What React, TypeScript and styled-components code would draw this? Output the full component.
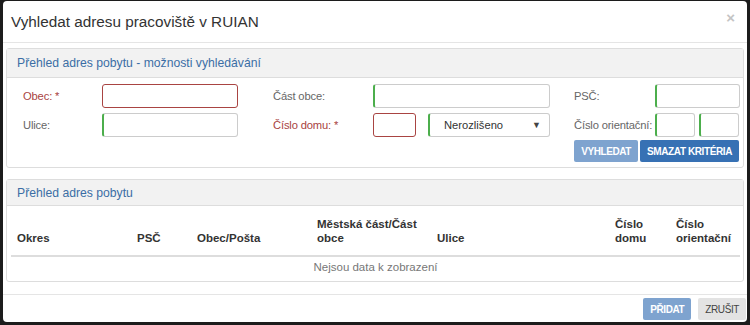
import styled, { createGlobalStyle } from "styled-components";

const GlobalStyle = createGlobalStyle`
  html, body {
    margin: 0;
    padding: 0;
    background: #1c1c1c;
  }
  body {
    font-family: "Liberation Sans", Arial, sans-serif;
    color: #333;
  }
  * {
    box-sizing: border-box;
  }
`;

const Backdrop = styled.div`
  width: 750px;
  height: 325px;
  padding: 1px 3px 3px 3px;
`;

const Modal = styled.div`
  display: flex;
  flex-direction: column;
  height: 100%;
  background: #fff;
  border-radius: 4px;
  overflow: hidden;
`;

const Header = styled.div`
  display: flex;
  align-items: center;
  justify-content: space-between;
  height: 42px;
  padding: 0 12px 0 8px;
  border-bottom: 1px solid #e5e5e5;
`;

const Title = styled.h4`
  margin: 0;
  font-size: 15.3px;
  font-weight: normal;
  color: #333;
`;

const Close = styled.span`
  font-size: 15px;
  font-weight: bold;
  color: #c4c4c4;
  margin-top: -8px;
`;

const Body = styled.div`
  display: flex;
  flex-direction: column;
  gap: 11px;
  padding: 5px 3px 0 3px;
`;

const Panel = styled.div`
  border: 1px solid #ddd;
  border-radius: 3px;
`;

const PanelHeading = styled.div<{ h: number }>`
  display: flex;
  align-items: center;
  height: ${p => p.h}px;
  padding: 0 10px;
  background: #f2f2f2;
  border-bottom: 1px solid #ddd;
  color: #3b6ea5;
  font-size: 12.2px;
`;

const SearchBody = styled.div`
  padding: 6px 4px 5px 16px;
`;

const FieldGrid = styled.div`
  display: grid;
  grid-template-columns: 79px 136px 135px 177px 105px 85px;
  grid-auto-rows: 24px;
  row-gap: 5px;
  align-items: center;
`;

const Label = styled.label<{ required?: boolean; indent?: number }>`
  padding-left: ${p => p.indent ?? 0}px;
  font-size: 11.2px;
  letter-spacing: -0.15px;
  white-space: nowrap;
  color: ${p => (p.required ? "#a94442" : "#666")};
`;

const Input = styled.div<{ state: "error" | "ok"; w?: number }>`
  height: 24px;
  width: ${p => (p.w ? `${p.w}px` : "100%")};
  border: 1px solid ${p => (p.state === "error" ? "#a94442" : "#ccc")};
  border-left: ${p => (p.state === "ok" ? "2px solid #4cae4c" : undefined)};
  border-radius: 3px;
  background: #fff;
`;

const Pair = styled.div<{ gap: number }>`
  display: flex;
  gap: ${p => p.gap}px;
`;

const Select = styled.div`
  display: flex;
  align-items: center;
  justify-content: space-between;
  flex: 1;
  height: 24px;
  padding: 0 8px 0 14px;
  border: 1px solid #ccc;
  border-left: 2px solid #4cae4c;
  border-radius: 3px;
  font-size: 11.2px;
  color: #333;
`;

const Caret = styled.span`
  font-size: 9px;
  color: #444;
`;

const Actions = styled.div<{ pad?: string; gap: number }>`
  display: flex;
  justify-content: flex-end;
  gap: ${p => p.gap}px;
  padding: ${p => p.pad ?? "0"};
`;

const Button = styled.button<{ variant: "primary" | "disabled" | "default" }>`
  height: 22px;
  padding: 0 6px;
  border: 1px solid transparent;
  border-radius: 2px;
  font-family: inherit;
  font-size: 10px;
  letter-spacing: -0.4px;
  text-transform: uppercase;
  background: ${p =>
    p.variant === "primary" ? "#3771b4" : p.variant === "disabled" ? "#7ea3cf" : "#e3e3e3"};
  color: ${p => (p.variant === "default" ? "#444" : "#fff")};
  font-weight: ${p => (p.variant === "default" ? "normal" : "bold")};
`;

const TableBody = styled.div`
  padding: 4px 4px 5px 4px;
`;

const Table = styled.table`
  width: 100%;
  border-collapse: collapse;
  font-size: 11.5px;
  table-layout: fixed;
`;

const Th = styled.th<{ w: number }>`
  width: ${p => p.w}px;
  padding: 7px 6px 10px 6px;
  text-align: left;
  vertical-align: bottom;
  font-weight: bold;
  line-height: 14px;
  color: #333;
  border-bottom: 2px solid #ddd;
`;

const Empty = styled.td`
  height: 20px;
  text-align: center;
  color: #777;
  line-height: 14px;
`;

const Footer = styled.div`
  margin-top: auto;
  border-top: 1px solid #e5e5e5;
  padding: 3px 1px 2px 0;
`;

const columns = [
  { label: "Okres", w: 120 },
  { label: "PSČ", w: 60 },
  { label: "Obec/Pošta", w: 120 },
  { label: "Městská část/Část obce", w: 120 },
  { label: "Ulice", w: 178 },
  { label: "Číslo domu", w: 61 },
  { label: "Číslo orientační", w: 70 },
];

export default function App() {
  return (
    <>
      <GlobalStyle />
      <Backdrop>
        <Modal>
          <Header>
            <Title>Vyhledat adresu pracoviště v RUIAN</Title>
            <Close>×</Close>
          </Header>
          <Body>
            <Panel>
              <PanelHeading h={29}>Přehled adres pobytu - možnosti vyhledávání</PanelHeading>
              <SearchBody>
                <FieldGrid>
                  <Label required>Obec: *</Label>
                  <Input state="error" />
                  <Label indent={35}>Část obce:</Label>
                  <Input state="ok" />
                  <Label indent={24}>PSČ:</Label>
                  <Input state="ok" />

                  <Label>Ulice:</Label>
                  <Input state="ok" />
                  <Label indent={35} required>Číslo domu: *</Label>
                  <Pair gap={12}>
                    <Input state="error" w={43} />
                    <Select>
                      Nerozlišeno
                      <Caret>▼</Caret>
                    </Select>
                  </Pair>
                  <Label indent={24}>Číslo orientační:</Label>
                  <Pair gap={4}>
                    <Input state="ok" w={40} />
                    <Input state="ok" w={40} />
                  </Pair>
                </FieldGrid>
                <Actions pad="3px 0 0 0" gap={2}>
                  <Button variant="disabled">Vyhledat</Button>
                  <Button variant="primary">Smazat kritéria</Button>
                </Actions>
              </SearchBody>
            </Panel>
            <Panel>
              <PanelHeading h={26}>Přehled adres pobytu</PanelHeading>
              <TableBody>
                <Table>
                  <thead>
                    <tr>
                      {columns.map(c => (
                        <Th key={c.label} w={c.w}>{c.label}</Th>
                      ))}
                    </tr>
                  </thead>
                  <tbody>
                    <tr>
                      <Empty colSpan={columns.length}>Nejsou data k zobrazení</Empty>
                    </tr>
                  </tbody>
                </Table>
              </TableBody>
            </Panel>
          </Body>
          <Footer>
            <Actions gap={7}>
              <Button variant="disabled">Přidat</Button>
              <Button variant="default">Zrušit</Button>
            </Actions>
          </Footer>
        </Modal>
      </Backdrop>
    </>
  );
}
